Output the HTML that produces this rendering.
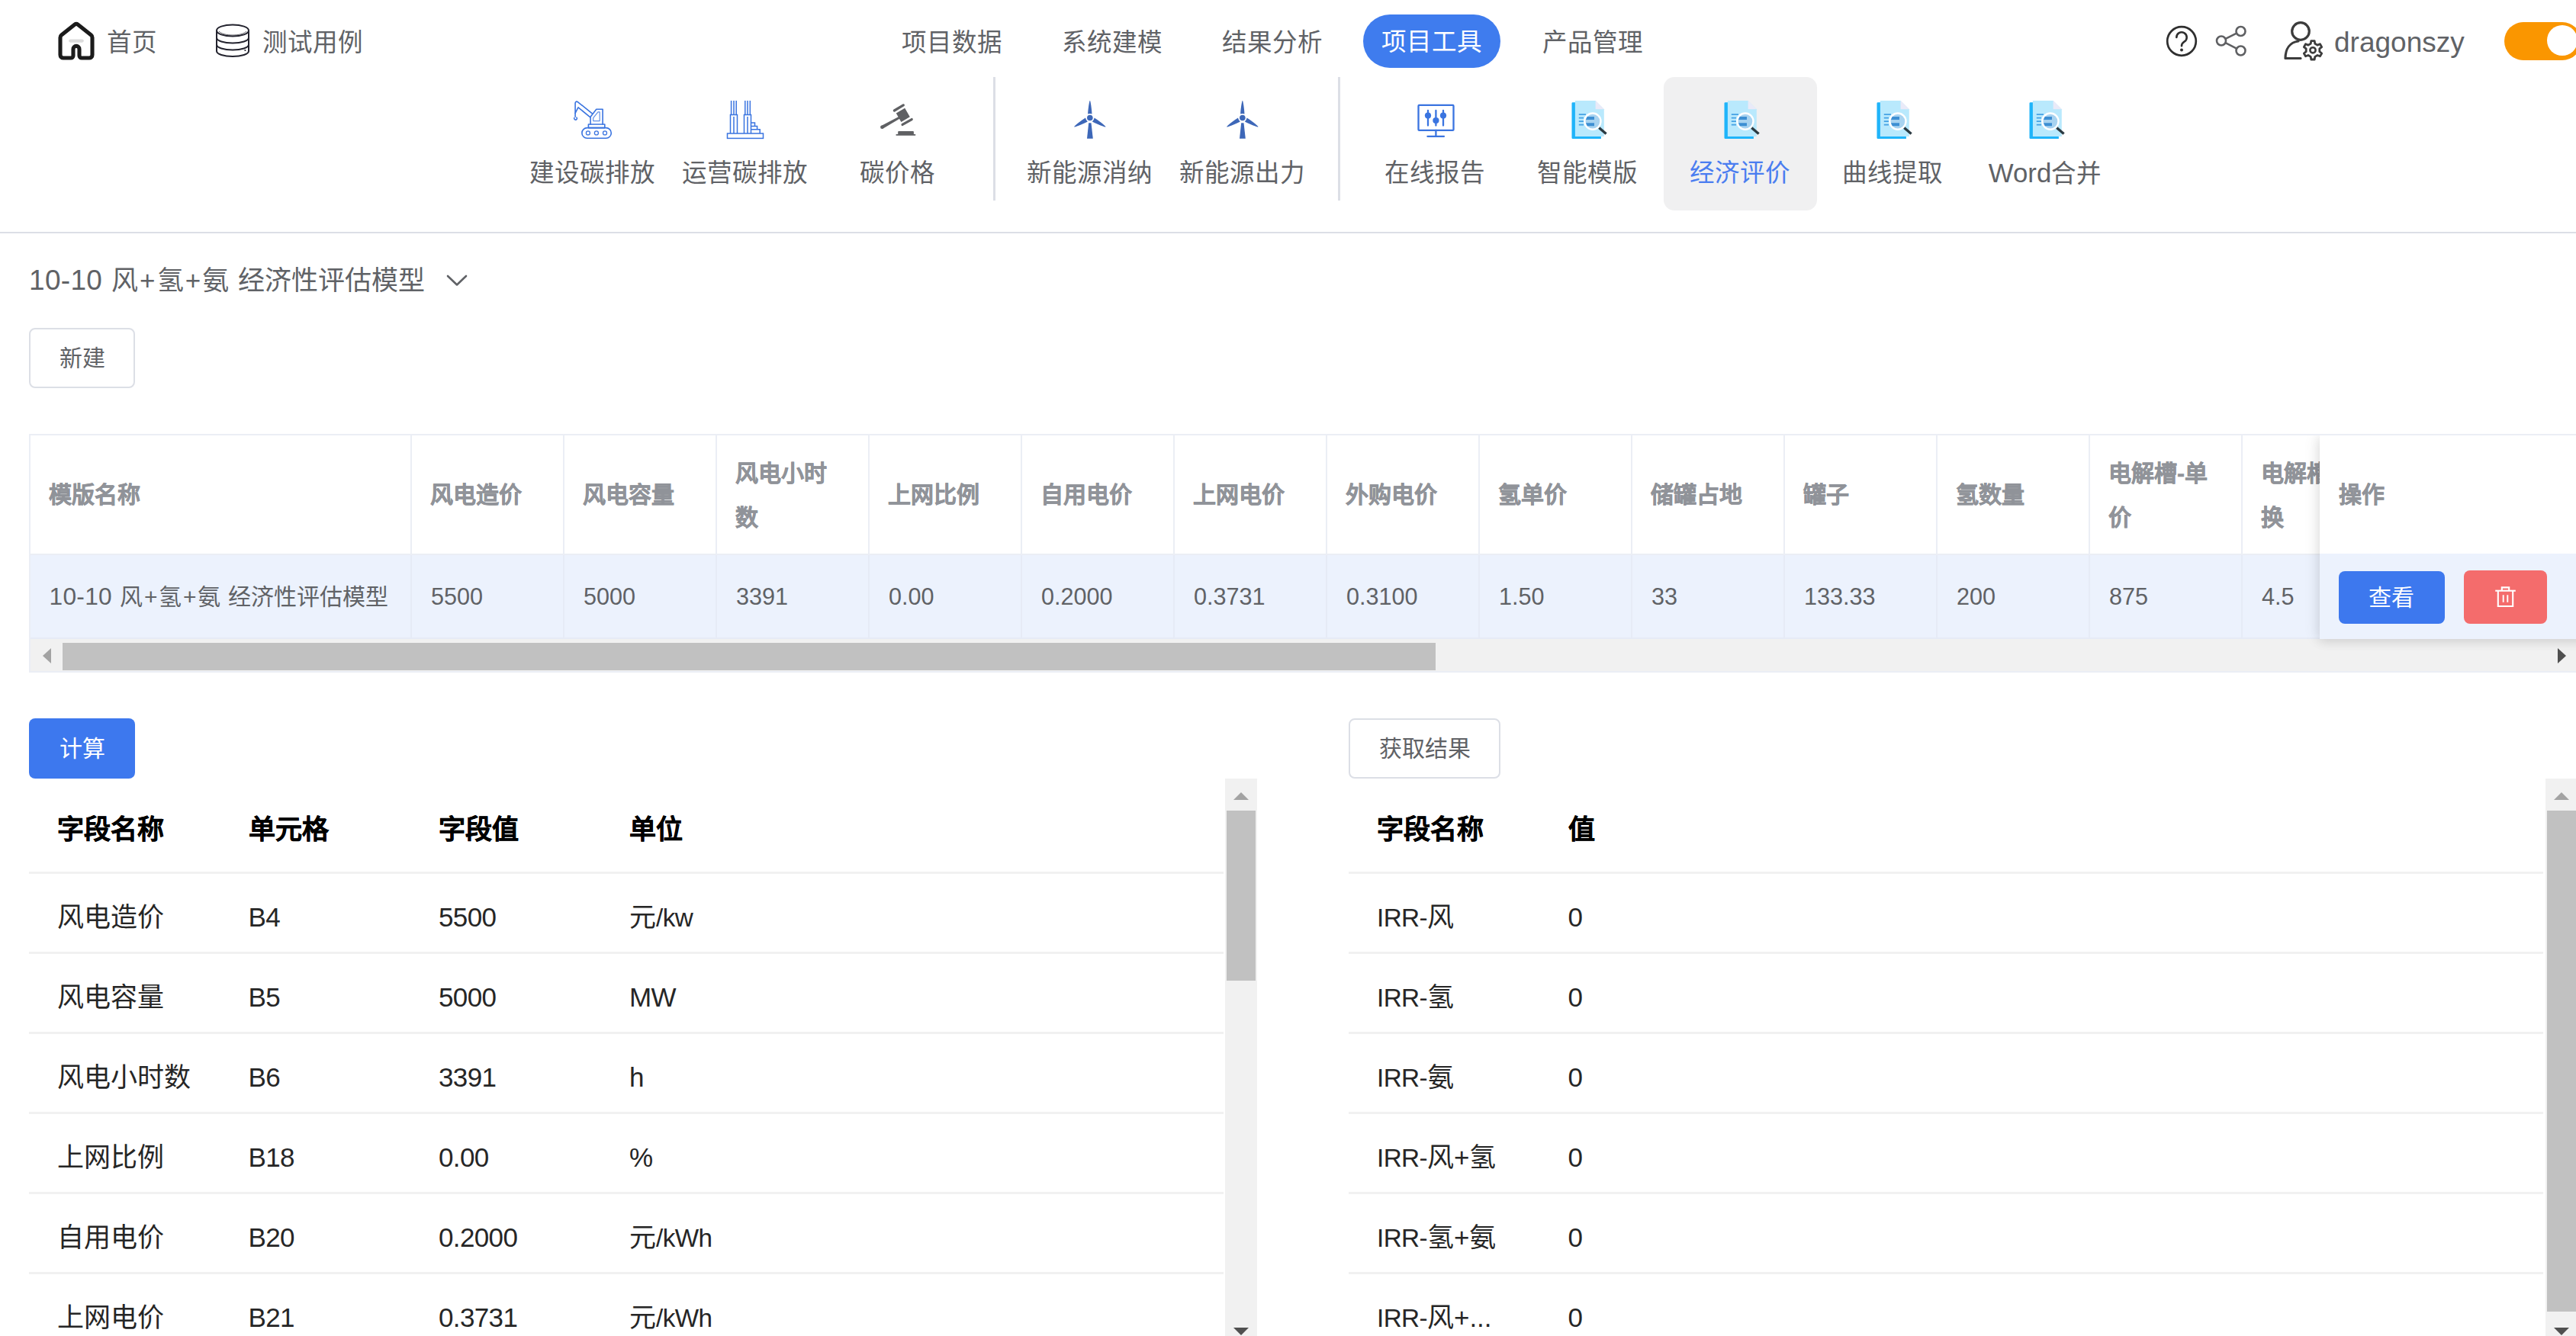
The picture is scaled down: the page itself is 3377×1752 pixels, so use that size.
<!DOCTYPE html>
<html lang="zh-CN">
<head>
<meta charset="utf-8">
<title>经济评价</title>
<style>
*{box-sizing:border-box;margin:0;padding:0}
html,body{width:3377px;height:1752px;overflow:hidden;background:#fff}
body{font-family:"Liberation Sans",sans-serif;color:#606266;position:relative}
.abs{position:absolute;white-space:nowrap}
svg{display:block;overflow:visible}

/* ---------- header ---------- */
.hd{position:absolute;left:0;top:0;width:3377px;height:108px}
.hd .t{position:absolute;white-space:nowrap;font-size:32.5px;line-height:44px;color:#606266;top:34px}
.pill{position:absolute;left:1787px;top:19px;width:180px;height:70px;border-radius:35px;background:#3f7cee}
.pill span{position:absolute;left:0;right:0;top:14.3px;text-align:center;font-size:32.5px;line-height:44px;color:#fff}
.user{position:absolute;left:3060px;top:32.2px;font-size:37px;line-height:48px;color:#606266;white-space:nowrap}
.sw{position:absolute;left:3283px;top:29px;width:101px;height:50px;border-radius:25px;background:#fa9600}
.sw i{position:absolute;left:56px;top:4px;width:40px;height:40px;border-radius:50%;background:#fff}

/* ---------- toolbar ---------- */
.tb{position:absolute;left:0;top:100px;width:3377px;height:206px;border-bottom:2px solid #dcdfe6}
.ti{position:absolute;top:1px;width:201px;height:175px;border-radius:14px}
.ti.on{background:#f0f0f1}
.ti .lb{position:absolute;left:-20px;width:240px;top:104px;text-align:center;font-size:32.5px;line-height:44px;color:#606266;white-space:nowrap}
.ti.on .lb{color:#4a7df0}
.ti .ic{position:absolute;left:100px;top:31px;width:50px;height:50px;margin-left:-25px}
.vd{position:absolute;top:1px;width:3px;height:162px;background:#dcdfe6}

/* ---------- main ---------- */
.d{font-size:1.057em;letter-spacing:.009em}
.p{display:inline-block;width:.703em;text-align:center}
.sp{display:inline-block;width:.337em}
.n{font-size:.95em;letter-spacing:-.018em}
b,.bd{font-weight:bold;-webkit-text-stroke:.45px currentColor}
.title{position:absolute;left:38px;top:343px;font-size:35px;line-height:50px;color:#606266;white-space:nowrap}
.btn{position:absolute;border-radius:8px;text-align:center;white-space:nowrap;font-size:30px}
.btn.df{border:2px solid #dcdfe6;background:#fff;color:#606266}
.btn.pr{background:#3d78ee;color:#fff}
.btn.dg{background:#f46c6c;color:#fff}

/* top table */
.tt .rc>span.mx{font-size:30px;left:24.5px}
.tt{position:absolute;left:38px;top:569px;width:3400px;height:313px;border:2px solid #ebeef5;border-right:0}
.tt .hc{position:absolute;top:0;height:157px;border-right:2px solid #ebeef5;border-bottom:2px solid #ebeef5;background:#fff}
.tt .hc>span{position:absolute;left:24px;right:10px;top:50%;margin-top:.6px;transform:translateY(-50%);font-size:30px;line-height:57.5px;font-weight:bold;-webkit-text-stroke:.45px #909399;color:#909399}
.tt .rc{position:absolute;top:157px;height:110px;border-right:2px solid #e6ebf6;border-bottom:2px solid #e6ebf6;background:#ecf2fd}
.tt .rc>span{position:absolute;left:25px;top:50%;margin-top:1.2px;transform:translateY(-50%);font-size:30.6px;line-height:57.5px;color:#606266;white-space:nowrap}
.fxw{position:absolute;left:2951px;top:0;width:450px;height:311px;overflow:hidden;pointer-events:none}
.fx{position:absolute;left:49.7px;top:0;width:400px;height:267px;box-shadow:-4px 0 18px rgba(0,0,0,.075), 0 4px 14px rgba(0,0,0,.09)}
.fx .h{position:absolute;left:0;top:0;width:100%;height:155px;background:#fff}
.fx .h>span{position:absolute;left:25.5px;top:50%;margin-top:.6px;transform:translateY(-50%);font-size:30px;line-height:57.5px;font-weight:bold;-webkit-text-stroke:.45px #909399;color:#909399}
.fx .r{position:absolute;left:0;top:155px;width:100%;height:112px;background:#ecf2fd}
.hsb{position:absolute;left:0;top:267px;width:3339px;height:42px;background:#f1f1f1}
.hsb .th{position:absolute;left:42px;top:4.5px;width:1800px;height:36px;background:#c1c1c1}

/* lower tables */
.lt{position:absolute;top:1021px;height:731px;overflow:hidden}
.lt .hr{position:absolute;left:0;top:0;width:100%;height:125px;border-bottom:3px solid #f1f1f1}
.lt .hr>span{position:absolute;top:41.8px;font-size:35px;line-height:50px;font-weight:bold;-webkit-text-stroke:.4px #000;color:#000;white-space:nowrap}
.lt .row{position:absolute;left:0;width:100%;height:105px;border-bottom:3px solid #f1f1f1}
.lt .row>span{position:absolute;top:31.6px;font-size:35px;line-height:50px;color:#262626;white-space:nowrap}
.c1{left:37px}.c2{left:287.5px}.c3{left:537px}.c4{left:787px}
.vsb{position:absolute;top:1021px;width:42px;height:731px;background:#f1f1f1}
.vsb .th{position:absolute;left:2px;width:38px;background:#c1c1c1}
.arr{position:absolute;width:0;height:0}
</style>
</head>
<body>

<!-- ================= HEADER ================= -->
<div class="hd">
  <svg class="abs" style="left:74px;top:26px" width="52" height="54" viewBox="0 0 52 54"><path d="M28.2 6.2 L45.5 20 Q47 21.2 47 23.2 V46 a4 4 0 0 1 -4 4 H33 a3 3 0 0 1 -3 -3 V38.4 a4 4 0 0 0 -8 0 V47 a3 3 0 0 1 -3 3 H9 a4 4 0 0 1 -4 -4 V23.2 Q5 21.2 6.5 20 L23.8 6.2 Q26 4.5 28.2 6.2 Z" fill="none" stroke="#1b1b1b" stroke-width="5.1" stroke-linejoin="round"/><rect x="16.2" y="25.4" width="19.6" height="4.3" rx="2.1" fill="#dcdcdc"/></svg>
  <span class="t" style="left:140px">首页</span>
  <svg class="abs" style="left:283px;top:31px" width="44" height="44" viewBox="0 0 44 44"><g fill="none" stroke="#23232e" stroke-width="2"><ellipse cx="22" cy="9" rx="21" ry="7.6"/><path d="M1 9 V36 c0 4 9.4 7 21 7 s21 -3 21 -7 V9"/><path d="M1 18.5 c0 4 9.4 7 21 7 s21 -3 21 -7"/><path d="M1 27.5 c0 4 9.4 7 21 7 s21 -3 21 -7"/><path d="M4 10 c3 3.4 10 5 18 5 s15 -1.600 18 -5" stroke-width="1" opacity=".7"/></g><circle cx="38.4" cy="35" r="1.1" fill="#23232e"/></svg>
  <span class="t" style="left:344px">测试用例</span>

  <span class="t" style="left:1182px">项目数据</span>
  <span class="t" style="left:1392px">系统建模</span>
  <span class="t" style="left:1602px">结果分析</span>
  <div class="pill"><span>项目工具</span></div>
  <span class="t" style="left:2022px">产品管理</span>

  <svg class="abs" style="left:2839px;top:33px" width="42" height="42" viewBox="0 0 42 42"><circle cx="21" cy="21" r="18.8" fill="none" stroke="#2f2f2f" stroke-width="2.7"/><path d="M14.3 16 a6.7 6.7 0 1 1 10.2 5.7 c-2.4 1.5 -3.5 2.6 -3.5 5.6" fill="none" stroke="#2f2f2f" stroke-width="2.6" stroke-linecap="round"/><circle cx="21" cy="32.6" r="2" fill="#2f2f2f"/></svg>
  <svg class="abs" style="left:2904px;top:33px" width="42" height="42" viewBox="0 0 42 42"><g fill="none" stroke="#5f6063" stroke-width="2.6"><circle cx="33.5" cy="8" r="6"/><circle cx="8" cy="20.5" r="6"/><circle cx="33.5" cy="33.5" r="6"/><path d="M13.5 17.8 L28 10.7 M13.5 23.2 L28 30.6"/></g></svg>
  <svg class="abs" style="left:2994px;top:28px" width="52" height="52" viewBox="0 0 52 52"><g fill="none" stroke="#3c3c3c" stroke-width="3.2" stroke-linecap="round" stroke-linejoin="round"><circle cx="22" cy="13" r="11.3"/><path d="M22 48.5 H2 C2 36 8 27.5 19 26"/></g><circle cx="38" cy="37.8" r="15" fill="#fff"/><path d="M35.22 29.24 L35.80 25.60 L40.20 25.60 L40.78 29.24 L44.02 31.11 L47.47 29.80 L49.67 33.60 L46.80 35.93 L46.80 39.67 L49.67 42.00 L47.47 45.80 L44.02 44.49 L40.78 46.36 L40.20 50.00 L35.80 50.00 L35.22 46.36 L31.98 44.49 L28.53 45.80 L26.33 42.00 L29.20 39.67 L29.20 35.93 L26.33 33.60 L28.53 29.80 L31.98 31.11 Z" fill="#fff" stroke="#3c3c3c" stroke-width="2.8" stroke-linejoin="round"/><circle cx="38" cy="37.8" r="3.6" fill="none" stroke="#3c3c3c" stroke-width="2.6"/></svg>
  <span class="user">dragonszy</span>
  <div class="sw"><i></i></div>
</div>

<!-- ================= TOOLBAR ================= -->
<div class="tb">
  <div class="ti" style="left:676px"><div class="ic"><svg width="52" height="50" viewBox="0 0 52 50" fill="none" stroke="#3a74e0" stroke-width="1.6" stroke-linejoin="round" stroke-linecap="round"><rect x="11.9" y="35.6" width="38.4" height="13.6" rx="6.8"/><g stroke-width="1.3"><circle cx="19.9" cy="42.4" r="2.5"/><circle cx="30.9" cy="42.4" r="2.5"/><circle cx="42" cy="42.4" r="2.5"/></g><rect x="20.4" y="31" width="21.4" height="4.6"/><path d="M23.1 31 V21.2 L30.8 11.2 H39.1 V31"/><path d="M26.7 26.6 V22.7 L33 14.9 H35.2 V26.6 Z" stroke-width="1.2" opacity=".8"/><path d="M25.3 16.8 L6.6 1.8 Q5 0.6 3.9 1.6 Q3.1 2.3 3.1 3.6 V16.4 L7 8.8 L22.6 21.7"/><path d="M3.1 16.4 V21.2"/><path d="M4.9 22 A1.85 1.85 0 1 1 1.8 22.6"/></svg></div><div class="lb">建设碳排放</div></div>
  <div class="ti" style="left:876px"><div class="ic"><svg width="50" height="50" viewBox="0 0 50 50" fill="none" stroke="#3a74e0" stroke-width="1.5"><rect x="2.5" y="43" width="47" height="6.4"/><path d="M6.5 43 V18.5 H15.5 V43 M11 21 V43"/><path d="M24.5 43 V18.5 H33.5 V43 M29 21 V43"/><path d="M7.6 18.5 V0 M11 18.5 V0 M14.2 18.5 V0 M25.8 18.5 V0 M29 18.5 V0 M32.3 18.5 V0"/><path d="M33.5 29 H38.5 V33.4 H41.6 V37.8 H45.2 V43 M33.5 33.4 H38.5 M33.5 37.8 H41.6"/></svg></div><div class="lb">运营碳排放</div></div>
  <div class="ti" style="left:1076px"><div class="ic"><svg width="52" height="50" viewBox="0 0 52 50"><g stroke="#5f6063" stroke-linecap="round" fill="none" stroke-width="3.3"><path d="M21.4 13 L33.3 5.9"/><path d="M32.1 31.4 L44.2 24.6"/></g><path d="M23.8 16.6 L35.2 9.8 L41.8 21.2 L30.4 27.9 Z" fill="#5f6063"/><path d="M4.2 33 L27.2 21 L28.6 23.4 L6.4 36.7 Z" fill="#5f6063"/><circle cx="5.3" cy="34.8" r="2.2" fill="#5f6063"/><path d="M26.2 41 a1 1 0 0 1 1 -1 H45.9 a1 1 0 0 1 1 1 V44.1 H49.2 V45.8 H23.6 V44.1 H26.2 Z" fill="#5f6063"/></svg></div><div class="lb">碳价格</div></div>
  <div class="vd" style="left:1302px"></div>
  <div class="ti" style="left:1328px"><div class="ic"><svg width="52" height="50" viewBox="0 0 52 50" fill="#3d67b8"><circle cx="25.83" cy="22.44" r="3.8"/><path d="M-2.65 -4.85 C-2.5 -10 -1.4 -18 -0.45 -22 Q0 -22.9 0.45 -22 C1.4 -18 2.5 -10 2.65 -4.85 Q0 -5.8 -2.65 -4.85 Z" transform="translate(25.83 22.44)"/><path d="M-2.65 -4.85 C-2.5 -10 -1.4 -18 -0.45 -22 Q0 -22.9 0.45 -22 C1.4 -18 2.5 -10 2.65 -4.85 Q0 -5.8 -2.65 -4.85 Z" transform="translate(25.83 22.44) rotate(120) scale(1.06)"/><path d="M-2.65 -4.85 C-2.5 -10 -1.4 -18 -0.45 -22 Q0 -22.9 0.45 -22 C1.4 -18 2.5 -10 2.65 -4.85 Q0 -5.8 -2.65 -4.85 Z" transform="translate(25.83 22.44) rotate(240) scale(1.06)"/><path d="M24.2 29.25 H27.5 L29.8 49.7 H22 Z"/></svg></div><div class="lb">新能源消纳</div></div>
  <div class="ti" style="left:1528px"><div class="ic"><svg width="52" height="50" viewBox="0 0 52 50" fill="#3d67b8"><circle cx="25.83" cy="22.44" r="3.8"/><path d="M-2.65 -4.85 C-2.5 -10 -1.4 -18 -0.45 -22 Q0 -22.9 0.45 -22 C1.4 -18 2.5 -10 2.65 -4.85 Q0 -5.8 -2.65 -4.85 Z" transform="translate(25.83 22.44)"/><path d="M-2.65 -4.85 C-2.5 -10 -1.4 -18 -0.45 -22 Q0 -22.9 0.45 -22 C1.4 -18 2.5 -10 2.65 -4.85 Q0 -5.8 -2.65 -4.85 Z" transform="translate(25.83 22.44) rotate(120) scale(1.06)"/><path d="M-2.65 -4.85 C-2.5 -10 -1.4 -18 -0.45 -22 Q0 -22.9 0.45 -22 C1.4 -18 2.5 -10 2.65 -4.85 Q0 -5.8 -2.65 -4.85 Z" transform="translate(25.83 22.44) rotate(240) scale(1.06)"/><path d="M24.2 29.25 H27.5 L29.8 49.7 H22 Z"/></svg></div><div class="lb">新能源出力</div></div>
  <div class="vd" style="left:1754px"></div>
  <div class="ti" style="left:1781px"><div class="ic"><svg width="52" height="50" viewBox="0 0 52 50"><g fill="none" stroke="#3a74e0" stroke-width="2.3"><rect x="3.5" y="5.9" width="46" height="33" rx="1"/><path d="M26.4 39 V46.8 M15.4 46.8 H37" stroke-linecap="round"/><path d="M16 13 V32.5 M26.4 13 V32.5 M36 13 V32.5" stroke-linecap="round"/></g><g fill="#3a74e0"><circle cx="16" cy="19.6" r="4.1"/><circle cx="26.4" cy="26" r="4.1"/><circle cx="36" cy="19.6" r="4.1"/></g></svg></div><div class="lb">在线报告</div></div>
  <div class="ti" style="left:1981px"><div class="ic"><svg width="52" height="52" viewBox="0 0 52 52"><path d="M5.9 2.2 H35 L42.9 10.5 V50.1 H5.9 a1.4 1.4 0 0 1 -1.4 -1.4 V3.6 a1.4 1.4 0 0 1 1.4 -1.4 Z" fill="#1fb4fa"/><path d="M8.9 0.1 H35.6 L46.8 11.3 V47 H8.9 Z" fill="#b9e9fd"/><path d="M35.6 0.1 L46.8 11.3 H35.6 Z" fill="#eaeaf8"/><path d="M13.8 18.2 H23 M13.8 22.7 H20 M13.8 27.1 H20 M13.8 31.6 H20" stroke="#45a2e4" stroke-width="1.8"/><path d="M40.2 35.4 L49.6 43.6" stroke="#2b3a42" stroke-width="3.3"/><circle cx="31.9" cy="27.1" r="10.6" fill="#a8d3f0" stroke="#fff" stroke-width="2.4"/><path d="M24.6 21.1 H34 V25 H23 Z M23 29.2 H34 V33.2 H24.8 Z" fill="#3d8fd3"/></svg></div><div class="lb">智能模版</div></div>
  <div class="ti on" style="left:2181px"><div class="ic"><svg width="52" height="52" viewBox="0 0 52 52"><path d="M5.9 2.2 H35 L42.9 10.5 V50.1 H5.9 a1.4 1.4 0 0 1 -1.4 -1.4 V3.6 a1.4 1.4 0 0 1 1.4 -1.4 Z" fill="#1fb4fa"/><path d="M8.9 0.1 H35.6 L46.8 11.3 V47 H8.9 Z" fill="#b9e9fd"/><path d="M35.6 0.1 L46.8 11.3 H35.6 Z" fill="#eaeaf8"/><path d="M13.8 18.2 H23 M13.8 22.7 H20 M13.8 27.1 H20 M13.8 31.6 H20" stroke="#45a2e4" stroke-width="1.8"/><path d="M40.2 35.4 L49.6 43.6" stroke="#2b3a42" stroke-width="3.3"/><circle cx="31.9" cy="27.1" r="10.6" fill="#a8d3f0" stroke="#fff" stroke-width="2.4"/><path d="M24.6 21.1 H34 V25 H23 Z M23 29.2 H34 V33.2 H24.8 Z" fill="#3d8fd3"/></svg></div><div class="lb">经济评价</div></div>
  <div class="ti" style="left:2381px"><div class="ic"><svg width="52" height="52" viewBox="0 0 52 52"><path d="M5.9 2.2 H35 L42.9 10.5 V50.1 H5.9 a1.4 1.4 0 0 1 -1.4 -1.4 V3.6 a1.4 1.4 0 0 1 1.4 -1.4 Z" fill="#1fb4fa"/><path d="M8.9 0.1 H35.6 L46.8 11.3 V47 H8.9 Z" fill="#b9e9fd"/><path d="M35.6 0.1 L46.8 11.3 H35.6 Z" fill="#eaeaf8"/><path d="M13.8 18.2 H23 M13.8 22.7 H20 M13.8 27.1 H20 M13.8 31.6 H20" stroke="#45a2e4" stroke-width="1.8"/><path d="M40.2 35.4 L49.6 43.6" stroke="#2b3a42" stroke-width="3.3"/><circle cx="31.9" cy="27.1" r="10.6" fill="#a8d3f0" stroke="#fff" stroke-width="2.4"/><path d="M24.6 21.1 H34 V25 H23 Z M23 29.2 H34 V33.2 H24.8 Z" fill="#3d8fd3"/></svg></div><div class="lb">曲线提取</div></div>
  <div class="ti" style="left:2581px"><div class="ic"><svg width="52" height="52" viewBox="0 0 52 52"><path d="M5.9 2.2 H35 L42.9 10.5 V50.1 H5.9 a1.4 1.4 0 0 1 -1.4 -1.4 V3.6 a1.4 1.4 0 0 1 1.4 -1.4 Z" fill="#1fb4fa"/><path d="M8.9 0.1 H35.6 L46.8 11.3 V47 H8.9 Z" fill="#b9e9fd"/><path d="M35.6 0.1 L46.8 11.3 H35.6 Z" fill="#eaeaf8"/><path d="M13.8 18.2 H23 M13.8 22.7 H20 M13.8 27.1 H20 M13.8 31.6 H20" stroke="#45a2e4" stroke-width="1.8"/><path d="M40.2 35.4 L49.6 43.6" stroke="#2b3a42" stroke-width="3.3"/><circle cx="31.9" cy="27.1" r="10.6" fill="#a8d3f0" stroke="#fff" stroke-width="2.4"/><path d="M24.6 21.1 H34 V25 H23 Z M23 29.2 H34 V33.2 H24.8 Z" fill="#3d8fd3"/></svg></div><div class="lb"><span style="font-size:1.07em">Word</span>合并</div></div>
</div>

<!-- ================= MAIN ================= -->
<div class="title"><span class="d">10-10</span><span class="sp"> </span>风<span class="p">+</span>氢<span class="p">+</span>氨<span class="sp"> </span>经济性评估模型</div>
<svg class="abs" style="left:585px;top:360px" width="28" height="16" viewBox="0 0 28 16"><path d="M2 2 L14 13.5 L26 2" fill="none" stroke="#606266" stroke-width="2.6" stroke-linecap="round" stroke-linejoin="round"/></svg>
<div class="btn df" style="left:38px;top:430px;width:139px;height:79px;line-height:75px">新建</div>

<div class="tt">
  <div class="hc" style="left:0px;width:500px"><span>模版名称</span></div>
  <div class="hc" style="left:500px;width:200px"><span>风电造价</span></div>
  <div class="hc" style="left:700px;width:200px"><span>风电容量</span></div>
  <div class="hc" style="left:900px;width:200px"><span>风电小时<br>数</span></div>
  <div class="hc" style="left:1100px;width:200px"><span>上网比例</span></div>
  <div class="hc" style="left:1300px;width:200px"><span>自用电价</span></div>
  <div class="hc" style="left:1500px;width:200px"><span>上网电价</span></div>
  <div class="hc" style="left:1700px;width:200px"><span>外购电价</span></div>
  <div class="hc" style="left:1900px;width:200px"><span>氢单价</span></div>
  <div class="hc" style="left:2100px;width:200px"><span>储罐占地</span></div>
  <div class="hc" style="left:2300px;width:200px"><span>罐子</span></div>
  <div class="hc" style="left:2500px;width:200px"><span>氢数量</span></div>
  <div class="hc" style="left:2700px;width:200px"><span>电解槽-单<br>价</span></div>
  <div class="hc" style="left:2900px;width:200px"><span>电解槽-更<br>换</span></div>
  <div class="rc" style="left:0px;width:500px"><span class="mx"><span class="d">10-10</span><span class="sp"> </span>风<span class="p">+</span>氢<span class="p">+</span>氨<span class="sp"> </span>经济性评估模型</span></div>
  <div class="rc" style="left:500px;width:200px"><span>5500</span></div>
  <div class="rc" style="left:700px;width:200px"><span>5000</span></div>
  <div class="rc" style="left:900px;width:200px"><span>3391</span></div>
  <div class="rc" style="left:1100px;width:200px"><span>0.00</span></div>
  <div class="rc" style="left:1300px;width:200px"><span>0.2000</span></div>
  <div class="rc" style="left:1500px;width:200px"><span>0.3731</span></div>
  <div class="rc" style="left:1700px;width:200px"><span>0.3100</span></div>
  <div class="rc" style="left:1900px;width:200px"><span>1.50</span></div>
  <div class="rc" style="left:2100px;width:200px"><span>33</span></div>
  <div class="rc" style="left:2300px;width:200px"><span>133.33</span></div>
  <div class="rc" style="left:2500px;width:200px"><span>200</span></div>
  <div class="rc" style="left:2700px;width:200px"><span>875</span></div>
  <div class="rc" style="left:2900px;width:200px"><span>4.5</span></div>
  <div class="hsb"><div class="th"></div><div class="arr" style="left:16px;top:12px;border-top:10px solid transparent;border-bottom:10px solid transparent;border-right:11px solid #a3a3a3"></div><div class="arr" style="left:3313px;top:12px;border-top:10px solid transparent;border-bottom:10px solid transparent;border-left:11px solid #505050"></div></div>
  <div class="fxw"><div class="fx"><div class="h"><span>操作</span></div><div class="r"></div>
    <div class="btn pr" style="left:25px;top:178px;width:139px;height:69px;line-height:69px">查看</div>
    <div class="btn dg" style="left:189px;top:177px;width:109px;height:70px"><svg style="position:absolute;left:40px;top:20px" width="29" height="29" viewBox="0 0 29 29"><g fill="none" stroke="#fff" stroke-width="2.1"><path d="M1.200 6.700 H27.800"/><path d="M9.800 6.200 V2.400 H19.200 V6.200"/><path d="M4.800 7 V27 H24.200 V7"/><path d="M11.700 12.200 V21.800 M17.300 12.200 V21.800" stroke-width="1.900"/></g></svg></div>
  </div></div>
</div>
<div class="btn pr" style="left:38px;top:942px;width:139px;height:79px;line-height:79px">计算</div>
<div class="lt" style="left:38px;width:1566px">
  <div class="hr"><span class="c1">字段名称</span><span class="c2">单元格</span><span class="c3">字段值</span><span class="c4">单位</span></div>
  <div class="row" style="top:125px"><span class="c1">风电造价</span><span class="c2 n">B4</span><span class="c3 n">5500</span><span class="c4">元<span class="n">/kw</span></span></div>
  <div class="row" style="top:230px"><span class="c1">风电容量</span><span class="c2 n">B5</span><span class="c3 n">5000</span><span class="c4 n">MW</span></div>
  <div class="row" style="top:335px"><span class="c1">风电小时数</span><span class="c2 n">B6</span><span class="c3 n">3391</span><span class="c4 n">h</span></div>
  <div class="row" style="top:440px"><span class="c1">上网比例</span><span class="c2 n">B18</span><span class="c3 n">0.00</span><span class="c4 n">%</span></div>
  <div class="row" style="top:545px"><span class="c1">自用电价</span><span class="c2 n">B20</span><span class="c3 n">0.2000</span><span class="c4">元<span class="n">/kWh</span></span></div>
  <div class="row" style="top:650px"><span class="c1">上网电价</span><span class="c2 n">B21</span><span class="c3 n">0.3731</span><span class="c4">元<span class="n">/kWh</span></span></div>
</div>
<div class="vsb" style="left:1606px"><div class="th" style="top:42px;height:223px"></div><div class="arr" style="left:10.7px;top:17.5px;border-left:10.3px solid transparent;border-right:10.3px solid transparent;border-bottom:10.3px solid #a3a3a3"></div><div class="arr" style="left:10.5px;top:720px;border-left:10.5px solid transparent;border-right:10.5px solid transparent;border-top:10.5px solid #505050"></div></div>
<div class="btn df" style="left:1768px;top:942px;width:199px;height:79px;line-height:75px">获取结果</div>
<div class="lt" style="left:1768px;width:1566px">
  <div class="hr"><span class="c1">字段名称</span><span class="c2">值</span></div>
  <div class="row" style="top:125px"><span class="c1"><span class="n">IRR-</span>风</span><span class="c2 n">0</span></div>
  <div class="row" style="top:230px"><span class="c1"><span class="n">IRR-</span>氢</span><span class="c2 n">0</span></div>
  <div class="row" style="top:335px"><span class="c1"><span class="n">IRR-</span>氨</span><span class="c2 n">0</span></div>
  <div class="row" style="top:440px"><span class="c1"><span class="n">IRR-</span>风+氢</span><span class="c2 n">0</span></div>
  <div class="row" style="top:545px"><span class="c1"><span class="n">IRR-</span>氢+氨</span><span class="c2 n">0</span></div>
  <div class="row" style="top:650px"><span class="c1"><span class="n">IRR-</span>风+...</span><span class="c2 n">0</span></div>
</div>
<div class="vsb" style="left:3337px"><div class="th" style="top:42px;height:657px"></div><div class="arr" style="left:10.7px;top:17.5px;border-left:10.3px solid transparent;border-right:10.3px solid transparent;border-bottom:10.3px solid #a3a3a3"></div><div class="arr" style="left:10.5px;top:720px;border-left:10.5px solid transparent;border-right:10.5px solid transparent;border-top:10.5px solid #505050"></div></div>


</body>
</html>
